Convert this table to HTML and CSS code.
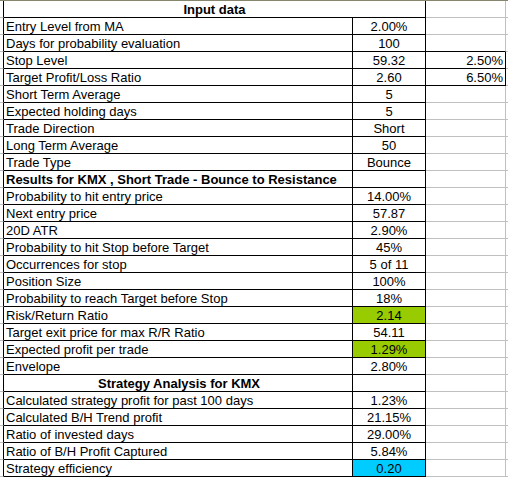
FILE: index.html
```html
<!DOCTYPE html>
<html>
<head>
<meta charset="utf-8">
<link rel="stylesheet" href="styles.css">
</head>
<body>
<div class="sheet">
  <div class="row"><div class="edge"></div><div class="merged bold">Input data</div><div class="ext"></div><div class="tail"></div></div>
  <div class="row"><div class="edge"></div><div class="lbl">Entry Level from MA</div><div class="val">2.00%</div><div class="ext"></div><div class="tail"></div></div>
  <div class="row"><div class="edge"></div><div class="lbl">Days for probability evaluation</div><div class="val">100</div><div class="ext dark-b"></div><div class="tail"></div></div>
  <div class="row"><div class="edge"></div><div class="lbl">Stop Level</div><div class="val">59.32</div><div class="ext dark-b dark-r">2.50%</div><div class="tail"></div></div>
  <div class="row"><div class="edge"></div><div class="lbl">Target Profit/Loss Ratio</div><div class="val">2.60</div><div class="ext dark-b dark-r">6.50%</div><div class="tail"></div></div>
  <div class="row"><div class="edge"></div><div class="lbl">Short Term Average</div><div class="val">5</div><div class="ext"></div><div class="tail"></div></div>
  <div class="row"><div class="edge"></div><div class="lbl">Expected holding days</div><div class="val">5</div><div class="ext"></div><div class="tail"></div></div>
  <div class="row"><div class="edge"></div><div class="lbl">Trade Direction</div><div class="val">Short</div><div class="ext"></div><div class="tail"></div></div>
  <div class="row"><div class="edge"></div><div class="lbl">Long Term Average</div><div class="val">50</div><div class="ext"></div><div class="tail"></div></div>
  <div class="row"><div class="edge"></div><div class="lbl">Trade Type</div><div class="val">Bounce</div><div class="ext"></div><div class="tail"></div></div>
  <div class="row"><div class="edge"></div><div class="lbl bold">Results for KMX , Short Trade - Bounce to Resistance</div><div class="val"></div><div class="ext"></div><div class="tail"></div></div>
  <div class="row"><div class="edge"></div><div class="lbl">Probability to hit entry price</div><div class="val">14.00%</div><div class="ext"></div><div class="tail"></div></div>
  <div class="row"><div class="edge"></div><div class="lbl">Next entry price</div><div class="val">57.87</div><div class="ext"></div><div class="tail"></div></div>
  <div class="row"><div class="edge"></div><div class="lbl">20D ATR</div><div class="val">2.90%</div><div class="ext"></div><div class="tail"></div></div>
  <div class="row"><div class="edge"></div><div class="lbl">Probability to hit Stop before Target</div><div class="val">45%</div><div class="ext"></div><div class="tail"></div></div>
  <div class="row"><div class="edge"></div><div class="lbl">Occurrences for stop</div><div class="val">5 of 11</div><div class="ext"></div><div class="tail"></div></div>
  <div class="row"><div class="edge"></div><div class="lbl">Position Size</div><div class="val">100%</div><div class="ext"></div><div class="tail"></div></div>
  <div class="row"><div class="edge"></div><div class="lbl">Probability to reach Target before Stop</div><div class="val">18%</div><div class="ext"></div><div class="tail"></div></div>
  <div class="row"><div class="edge"></div><div class="lbl">Risk/Return Ratio</div><div class="val green">2.14</div><div class="ext"></div><div class="tail"></div></div>
  <div class="row"><div class="edge"></div><div class="lbl">Target exit price for max R/R Ratio</div><div class="val">54.11</div><div class="ext"></div><div class="tail"></div></div>
  <div class="row"><div class="edge"></div><div class="lbl">Expected profit per trade</div><div class="val green">1.29%</div><div class="ext"></div><div class="tail"></div></div>
  <div class="row"><div class="edge"></div><div class="lbl">Envelope</div><div class="val">2.80%</div><div class="ext"></div><div class="tail"></div></div>
  <div class="row"><div class="edge"></div><div class="lbl bold center">Strategy Analysis for KMX</div><div class="val"></div><div class="ext"></div><div class="tail"></div></div>
  <div class="row"><div class="edge"></div><div class="lbl">Calculated strategy profit for past 100 days</div><div class="val">1.23%</div><div class="ext"></div><div class="tail"></div></div>
  <div class="row"><div class="edge"></div><div class="lbl">Calculated B/H Trend profit</div><div class="val">21.15%</div><div class="ext"></div><div class="tail"></div></div>
  <div class="row"><div class="edge"></div><div class="lbl">Ratio of invested days</div><div class="val">29.00%</div><div class="ext"></div><div class="tail"></div></div>
  <div class="row"><div class="edge"></div><div class="lbl">Ratio of B/H Profit Captured</div><div class="val">5.84%</div><div class="ext"></div><div class="tail"></div></div>
  <div class="row"><div class="edge"></div><div class="lbl">Strategy efficiency</div><div class="val blue">0.20</div><div class="ext"></div><div class="tail"></div></div>
</div>
</body>
</html>
```

FILE: styles.css
```css
html, body {
  margin: 0;
  padding: 0;
  background: #ffffff;
}

.sheet {
  width: 508px;
  border-top: 1px solid #86866f;
  font-family: "Liberation Sans", Arial, sans-serif;
  font-size: 13px;
  color: #000000;
}

.row {
  display: grid;
  grid-template-columns: 4px 349px 73px 80px 2px;
  height: 17px;
}

.row > div {
  box-sizing: border-box;
  height: 17px;
  line-height: 17px;
  white-space: nowrap;
  overflow: hidden;
  border-bottom: 1px solid #c0c0c0;
}

.edge {
  border-right: 1px solid #000000;
}

.lbl {
  border-right: 1px solid #000000;
  border-bottom-color: #000000 !important;
  padding-left: 2px;
}

.merged {
  grid-column: span 2;
  border-right: 1px solid #000000;
  border-bottom-color: #000000 !important;
  text-align: center;
}

.val {
  border-right: 1px solid #000000;
  border-bottom-color: #000000 !important;
  text-align: center;
}

.ext {
  border-right: 1px solid #c0c0c0;
  text-align: right;
  padding-right: 2px;
}

.ext.dark-b {
  border-bottom-color: #000000 !important;
}

.ext.dark-r {
  border-right-color: #000000;
}

.bold {
  font-weight: bold;
}

.center {
  text-align: center;
}

.green {
  background: #99cc00;
}

.blue {
  background: #00ccff;
}
```
